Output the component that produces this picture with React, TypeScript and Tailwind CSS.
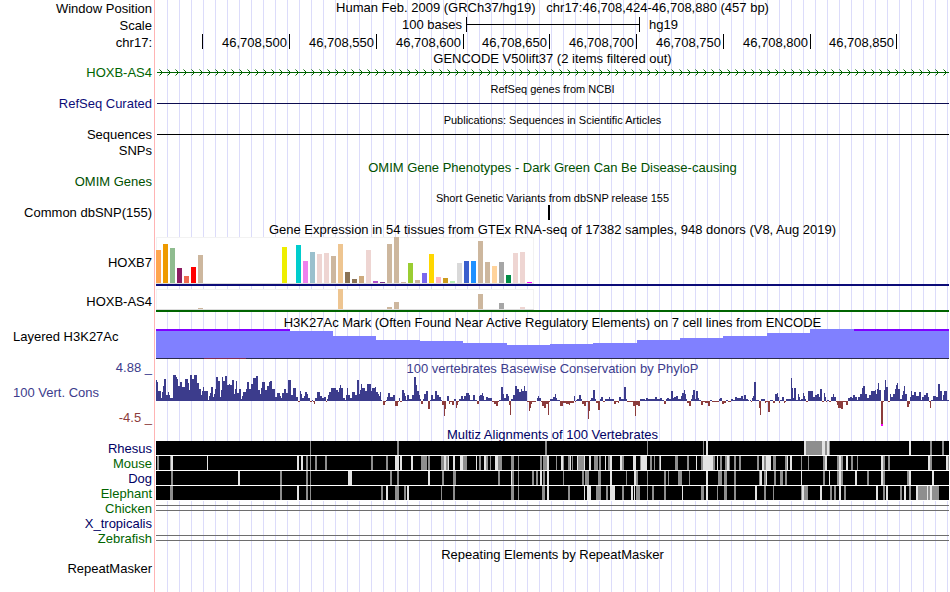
import type { ReactNode } from "react";
import clsx from "clsx";

const TRACK_WIDTH = 793;

type Pair = [number, number];

const rulerLabels = [
  "",
  "46,708,500",
  "46,708,550",
  "46,708,600",
  "46,708,650",
  "46,708,700",
  "46,708,750",
  "46,708,800",
  "46,708,850",
];

// tissue index, height, colour
type Tissue = [number, number, string];

const hoxb7: Tissue[] = [
  [0, 33, "#ffa54f"],
  [1, 39, "#ee9a00"],
  [2, 35, "#8fbc8f"],
  [3, 15, "#8b1c62"],
  [4, 7, "#ee6a50"],
  [5, 16, "#ff0000"],
  [6, 28, "#cdb79e"],
  [18, 36, "#eeee00"],
  [20, 38, "#00cdcd"],
  [21, 22, "#ee82ee"],
  [22, 31, "#9ac0cd"],
  [23, 29, "#eed5d2"],
  [24, 30, "#eed5d2"],
  [25, 27, "#cdb79e"],
  [26, 39, "#eec591"],
  [27, 11, "#8b7355"],
  [28, 4, "#8b7355"],
  [29, 7, "#cdaa7d"],
  [30, 33, "#eed5d2"],
  [31, 2, "#b452cd"],
  [32, 1, "#7a378b"],
  [33, 39, "#cdb79e"],
  [34, 46, "#cdb79e"],
  [35, 1, "#cdb79e"],
  [36, 20, "#9acd32"],
  [37, 3, "#cdb79e"],
  [38, 10, "#7a67ee"],
  [39, 29, "#ffd700"],
  [40, 6, "#ffb6c1"],
  [41, 5, "#cd9b1d"],
  [42, 2, "#b4eeb4"],
  [43, 20, "#d9d9d9"],
  [44, 22, "#3a5fcd"],
  [45, 22, "#1e90ff"],
  [46, 42, "#cdb79e"],
  [47, 21, "#cdb79e"],
  [48, 17, "#ffd39b"],
  [49, 21, "#a6a6a6"],
  [50, 8, "#008b45"],
  [51, 30, "#eed5d2"],
  [52, 31, "#eed5d2"],
  [53, 1, "#ff00ff"],
];

const hoxbAs4: Tissue[] = [
  [6, 1, "#cdb79e"],
  [26, 20, "#eec591"],
  [33, 2, "#cdb79e"],
  [34, 7, "#cdb79e"],
  [46, 15, "#cdb79e"],
  [49, 6, "#a6a6a6"],
  [52, 2, "#eed5d2"],
];

// x of the right edge, y of the top
const h3k27ac: Pair[] = [
  [134, 2], [177, 2], [220, 7], [264, 11], [307, 12], [351, 14], [394, 16], [437, 15],
  [481, 14], [524, 11], [567, 9], [611, 7], [654, 4], [698, 0], [793, 1],
];

// runs of [width, score] from each start
const phyloP: { start: number; runs: Pair[] }[] = [
  {
    start: 0,
    runs: [
      [1, 21], [1, 19], [3, 10], [1, 3], [1, 9], [1, 15], [2, 22], [2, 6], [1, 9], [1, 6], [3, 3],
      [3, 26], [1, 24], [1, 22], [2, 15], [2, 19], [3, 14], [3, 22], [1, 18], [1, 11], [2, 26],
      [2, 22], [3, 26], [2, 18], [2, 12], [1, 6], [1, 10], [1, 14], [4, 10], [1, 1], [1, 5], [1, 8],
      [2, 14], [1, 4], [1, 7], [1, 12], [2, 24], [2, 20], [1, 4], [1, 11], [1, 24], [2, 20],
      [2, 25], [2, 16], [1, 17], [2, 16], [2, 21], [1, 7], [1, 12], [1, 20], [2, 8], [2, 12],
      [1, 2], [1, 5], [3, 9], [1, 12], [2, 19], [2, 12], [2, 17], [3, 23], [2, 25], [2, 11], [1, 7],
      [1, 13], [3, 19], [2, 11], [2, 15], [1, 19], [2, 20], [3, 12], [2, 4], [3, 8], [1, 5], [1, 3],
      [2, 8], [2, 12], [2, 8], [3, 21], [2, 6], [3, 13], [2, 4], [2, -1], [1, 10], [1, 7], [2, 3],
      [1, 5], [2, 9], [1, 7], [2, 3], [2, -1], [1, 1], [1, -1], [1, -3], [2, 3], [3, 9], [2, 5],
      [2, 3], [2, 4], [1, -1], [1, 2], [1, 6], [2, 9], [5, 13], [2, 11], [1, 9], [1, 13], [1, 16],
      [2, 13], [2, 3], [1, 1], [1, 6], [1, 13], [2, 6],
    ],
  },
  {
    start: 194,
    runs: [
      [2, 3], [3, 9], [2, 6], [2, 21], [1, 7], [1, 11], [1, 17], [3, 13], [2, 10], [4, 17], [1, 10],
      [3, 13], [1, 14], [2, 9], [1, 7], [1, 5], [1, 9], [1, 1], [1, 0], [2, -4], [1, -1], [1, 1],
      [1, 4], [2, 8], [3, 4], [2, 6], [3, -5], [1, -1], [1, 3], [2, -1], [2, 11], [1, 8], [1, 5],
      [1, 1], [2, 6], [3, 2], [2, 6], [2, 24], [1, 16], [2, 10], [1, 6], [1, 2], [2, -3], [1, 2],
      [2, 7], [2, 10], [2, -8], [1, 1], [2, 6], [2, 2], [2, 10], [2, 6], [2, 4], [1, 1], [2, -4],
      [1, -15], [1, -8], [1, 0], [2, 5], [1, -3], [2, -1], [2, -4], [2, 2], [1, -7], [1, -4],
      [1, -1], [2, 2], [2, 5], [1, 2], [2, 5], [3, 8], [1, 6], [3, 1], [2, 6], [2, 1], [2, -3],
      [1, 5], [2, 6], [1, 8], [1, 5], [2, 1], [2, 4], [4, 3], [2, -1], [2, -3], [2, -5], [1, -1],
      [2, 1], [2, 14], [1, 7], [2, 3], [2, 7], [1, 5], [1, -4], [1, -14], [2, 2], [2, 6], [2, 15],
      [2, 12], [2, 9], [1, 12], [2, 10], [1, 15], [2, 10], [2, -1], [1, -10], [1, -7], [1, -3],
      [4, -1], [1, 0], [1, 3], [1, 5], [2, 3], [1, -1], [2, -5], [2, -7], [2, -3], [1, -14],
      [1, -1],
    ],
  },
  {
    start: 394,
    runs: [
      [3, 2], [2, 4], [1, 7], [1, 3], [2, 1], [1, 1], [3, -5], [3, -2], [3, -3], [1, -4], [4, -2],
      [1, 5], [1, -1], [1, 1], [2, 2], [2, 6], [1, 2], [2, -3], [2, -5], [2, -1], [1, -18],
      [1, -10], [1, 1], [2, 3], [2, 11], [1, 2], [2, -2], [2, -9], [1, 2], [2, 4], [2, -1], [4, 2],
      [1, 4], [4, 2], [2, -3], [2, -1], [1, -2], [2, 4], [3, 2], [2, 14], [1, 2], [2, -1], [4, -1],
      [2, -5], [1, -15], [2, -4], [2, -5], [5, 2], [1, 1], [2, 3], [7, 2], [2, 4], [3, 2], [2, 3],
      [2, 1], [2, -3], [1, 2], [2, 3], [2, 2], [2, 10], [1, 3], [2, 4], [2, 5], [3, 2], [1, 5],
      [2, 8], [1, 11], [1, 7], [1, 2], [2, -2], [2, -5], [1, 2], [1, 6], [2, 11], [1, 2], [2, 10],
      [1, 3], [2, 1], [2, -4], [2, -1], [3, -2], [2, -5], [2, 1], [7, -1], [1, 2], [2, 3], [2, -3],
      [2, -2], [2, 1], [3, -1], [2, 2], [2, 1], [2, 4], [4, 3], [2, 5], [1, 2], [2, 6], [2, 2],
      [1, 1],
    ],
  },
  {
    start: 594,
    runs: [
      [1, 1], [1, -1], [1, 3], [1, 5], [2, 19], [3, 1], [1, -7], [1, -14], [4, 2], [1, -2], [2, -1],
      [2, -11], [3, 1], [2, -2], [2, 7], [1, 8], [1, 4], [1, -2], [2, 1], [2, 4], [1, -2], [1, -1],
      [5, 2], [1, 23], [1, 13], [1, 3], [2, 13], [2, 1], [1, 7], [1, 4], [1, 1], [2, 2], [1, 8],
      [1, 5], [1, 2], [2, -1], [5, 10], [2, 4], [2, 6], [2, 7], [1, 4], [2, 12], [2, -1], [1, 8],
      [1, 4], [1, -1], [2, 1], [2, -1], [2, 4], [1, 7], [2, 4], [1, -1], [1, -4], [3, -7], [2, -8],
      [3, -1], [2, -4], [2, 3], [2, 4], [1, 3], [2, 6], [2, 4], [1, 1], [2, 4], [2, 7], [1, 13],
      [2, 15], [2, 7], [2, 3], [2, 6], [4, 10], [1, 11], [1, 7], [1, 12], [1, 18], [2, 11],
      [2, -23], [1, -1], [1, 11], [1, 21], [2, 14], [2, -1], [1, 7], [2, 4], [2, 7], [1, 12],
      [1, 16], [1, 18], [2, 12], [2, 2], [1, 6], [1, 10], [1, 15], [2, 7], [2, -6], [1, -3], [1, 4],
      [1, 10], [2, 6], [2, 9], [3, 5], [2, 9], [1, 1], [2, 4], [2, 6], [2, 8], [1, 4], [1, -1],
      [1, -7], [2, 1], [3, 5], [2, 4], [2, 17], [2, 10], [1, 1], [1, 6], [3, 10], [2, 1],
    ],
  },
];

// [x, width] of the weaker (gray) and missing (light) columns
const alignments: { name: string; color: string; gray: Pair[]; light: Pair[] }[] = [
  {
    name: "Rhesus",
    color: "text-[#000064]",
    gray: [
      [154, 1], [241, 2], [389, 2], [491, 1], [547, 1], [650, 16], [669, 2], [673, 1], [774, 2],
      [786, 2],
    ],
    light: [[550, 2], [648, 2], [666, 3], [671, 2], [753, 2]],
  },
  {
    name: "Mouse",
    color: "text-[#006400]",
    gray: [
      [1, 2], [14, 1], [150, 2], [154, 1], [159, 2], [169, 2], [215, 2], [230, 2], [265, 6],
      [272, 2], [285, 3], [290, 2], [307, 4], [323, 2], [330, 2], [334, 1], [342, 4], [355, 3],
      [362, 1], [384, 2], [387, 4], [400, 1], [407, 1], [412, 2], [416, 1], [422, 6], [438, 4],
      [443, 2], [452, 2], [466, 2], [484, 1], [494, 2], [498, 1], [503, 1], [519, 3], [531, 2],
      [545, 2], [557, 2], [564, 2], [569, 2], [573, 1], [578, 2], [583, 2], [601, 2], [608, 2],
      [617, 3], [629, 2], [645, 1], [652, 1], [667, 2], [681, 2], [685, 2], [695, 2], [701, 1],
      [727, 2], [732, 2], [774, 2], [792, 1],
    ],
    light: [
      [15, 2], [51, 1], [141, 2], [145, 2], [239, 4], [244, 2], [255, 2], [288, 2], [292, 1],
      [297, 2], [304, 3], [320, 1], [328, 2], [339, 3], [391, 2], [405, 2], [414, 1], [421, 1],
      [428, 1], [433, 2], [449, 1], [454, 2], [464, 2], [477, 3], [485, 6], [504, 1], [540, 1],
      [547, 10], [561, 1], [571, 2], [606, 2], [610, 5], [631, 1], [634, 2], [669, 2], [683, 2],
      [690, 2], [725, 2], [772, 2], [790, 2],
    ],
  },
  {
    name: "Dog",
    color: "text-[#000064]",
    gray: [
      [15, 2], [124, 2], [150, 2], [154, 1], [234, 2], [241, 2], [286, 2], [297, 3], [342, 2],
      [356, 2], [362, 1], [376, 2], [380, 2], [387, 2], [407, 1], [426, 2], [429, 4], [442, 3],
      [470, 1], [480, 2], [491, 1], [508, 2], [512, 1], [522, 4], [533, 1], [562, 4], [568, 3],
      [578, 2], [603, 1], [608, 2], [618, 2], [624, 3], [629, 2], [667, 2], [681, 2], [685, 2],
      [711, 2], [727, 2], [751, 2],
    ],
    light: [
      [82, 2], [192, 4], [272, 2], [355, 1], [384, 2], [391, 2], [454, 2], [478, 2], [550, 2],
      [604, 2], [610, 1], [645, 1], [673, 1], [683, 2], [699, 2], [725, 2], [753, 2], [776, 2],
    ],
  },
  {
    name: "Elephant",
    color: "text-[#006400]",
    gray: [
      [14, 3], [124, 2], [150, 2], [154, 1], [225, 2], [239, 4], [248, 2], [285, 1], [297, 2],
      [355, 3], [362, 1], [386, 3], [412, 2], [440, 5], [450, 2], [466, 2], [480, 4], [491, 1],
      [496, 2], [508, 2], [545, 3], [561, 1], [568, 3], [578, 2], [608, 2], [617, 1], [645, 1],
      [648, 4], [674, 2], [678, 2], [688, 2], [727, 2], [744, 2], [753, 2], [762, 9], [772, 2],
      [776, 7],
    ],
    light: [
      [141, 2], [230, 2], [251, 2], [391, 2], [428, 1], [431, 4], [454, 5], [475, 2], [478, 1],
      [526, 1], [550, 2], [599, 2], [646, 2], [664, 2], [683, 2], [720, 2], [730, 2], [748, 2],
      [760, 2], [771, 1], [774, 2],
    ],
  },
];

function Row({
  className,
  label,
  labelClass,
  children,
}: {
  className: string;
  label?: ReactNode;
  labelClass?: string;
  children?: ReactNode;
}) {
  return (
    <div className={clsx("flex whitespace-nowrap", className)}>
      <div className={clsx("w-39 shrink-0 pr-1 text-right", labelClass)}>{label}</div>
      <div className="min-w-0 flex-1">{children}</div>
    </div>
  );
}

function Title({ children, className }: { children: ReactNode; className?: string }) {
  return <h2 className={clsx("pt-px text-center", className)}>{children}</h2>;
}

function Plot({ height, children }: { height: number; children: ReactNode }) {
  return (
    <svg
      className="block h-full w-full overflow-visible"
      viewBox={`0 0 ${TRACK_WIDTH} ${height}`}
      preserveAspectRatio="none"
      shapeRendering="crispEdges"
      aria-hidden="true"
    >
      {children}
    </svg>
  );
}

function Line({ color }: { color: string }) {
  return (
    <Plot height={14}>
      <rect x="1" y="6" width={TRACK_WIDTH - 1} height="1" fill={color} />
    </Plot>
  );
}

function Expression({
  tissues,
  height,
  top,
  base,
  color,
}: {
  tissues: Tissue[];
  height: number;
  top: number;
  base: number;
  color: string;
}) {
  return (
    <Plot height={height}>
      <rect x="0" y={top} width="378" height={base - top} fill="#f2f2f2" />
      <rect x="1" y={top + 1} width="376" height={base - top - 1} fill="#fff" />
      {tissues.map(([i, h, fill]) => (
        <rect key={i} x={i * 7} y={base - h} width="5" height={h} fill={fill} />
      ))}
      <rect x="0" y={base} width="378" height="1" fill="#dcdcdc" />
      <rect x="0" y={base + 1} width={TRACK_WIDTH} height="2" fill={color} />
    </Plot>
  );
}

function Histone() {
  return (
    <Plot height={30}>
      {h3k27ac.map(([end, y], i) => {
        const x = i === 0 ? 0 : h3k27ac[i - 1][0];
        return <rect key={end} x={x} y={y} width={end - x} height={29 - y} fill="#8080ff" />;
      })}
      <rect x="0" y="0" width="134" height="2" fill="#8000ff" />
      <rect x="698" y="0" width="95" height="2" fill="#8000ff" />
      <rect x="0" y="29" width={TRACK_WIDTH} height="1" fill="#2b2b48" />
      <rect x="48" y="29" width="42" height="1" fill="#80304f" />
    </Plot>
  );
}

function Conservation() {
  return (
    <Plot height={50}>
      {phyloP.map(({ start, runs }) => {
        let x = start;
        return runs.map(([w, score]) => {
          const left = x;
          x += w;
          return (
            <rect
              key={left}
              x={left}
              y={score > 0 ? 25 - score : 25}
              width={w}
              height={Math.abs(score)}
              fill={score > 0 ? "#3c3c8c" : "#8c3c3c"}
            />
          );
        });
      })}
      <rect x="725" y="48" width="2" height="2" fill="#ff00ff" />
    </Plot>
  );
}

function Alignment({ gray, light }: { gray: Pair[]; light: Pair[] }) {
  return (
    <Plot height={15}>
      <rect width={TRACK_WIDTH} height="15" fill="#fff" />
      <rect width={TRACK_WIDTH} height="14" fill="#000" />
      {gray.map(([x, w]) => (
        <rect key={x} x={x} width={w} height="14" fill="#8e8e8e" />
      ))}
      {light.map(([x, w]) => (
        <rect key={x} x={x} width={w} height="14" fill="#e3e3e3" />
      ))}
    </Plot>
  );
}

function DoubleLine() {
  return (
    <Plot height={15}>
      <rect y="4" width={TRACK_WIDTH} height="1" fill="#6e6e6e" />
      <rect y="9" width={TRACK_WIDTH} height="1" fill="#6e6e6e" />
    </Plot>
  );
}

export default function App() {
  return (
    <main className="min-h-screen bg-[linear-gradient(to_right,white_154px,#ffb4b4_154px,#ffb4b4_155px,white_155px,white_156px,transparent_156px),repeating-linear-gradient(to_right,transparent_0px,transparent_11px,#dcdcfa_11px,#dcdcfa_12px)] pr-px font-['Liberation_Sans',Arial,sans-serif] text-[13px] text-black">
      <Row className="h-[17px] leading-[17px]" label="Window Position">
        <h1 className="text-center leading-[15px] whitespace-pre">
          {"Human Feb. 2009 (GRCh37/hg19)   chr17:46,708,424-46,708,880 (457 bp)"}
        </h1>
      </Row>
      <Row className="h-[17px] leading-[17px]" label="Scale">
        <div className="grid grid-cols-[310fr_174fr_309fr] leading-[15px]">
          <span className="pr-1 text-right">100 bases</span>
          <span className="flex h-[15px] items-center border-x border-black">
            <span className="h-px w-full bg-black" />
          </span>
          <span className="pl-[9px]">hg19</span>
        </div>
      </Row>
      <Row className="h-4 leading-[18px]" label="chr17:">
        <div className="grid grid-cols-[47fr_87fr_87fr_87fr_86fr_87fr_87fr_87fr_86fr_52fr]">
          {rulerLabels.map((label) => (
            <span key={label} className="h-[15px] border-r border-black pr-0.5 text-right">
              {label}
            </span>
          ))}
        </div>
      </Row>

      <Row className="h-4 leading-4">
        <Title>GENCODE V50lift37 (2 items filtered out)</Title>
      </Row>
      <Row className="h-3.5 leading-3.5" label="HOXB-AS4" labelClass="text-[#006400]">
        <Plot height={14}>
          <rect x="1" y="6" width={TRACK_WIDTH - 1} height="1" fill="#006400" />
          {Array.from({ length: 99 }, (_, i) => (
            <path
              key={i}
              d={`M${i * 8 + 3.5} 3.5l3 3l-3 3`}
              fill="none"
              stroke="#006400"
              strokeWidth="1"
              shapeRendering="auto"
            />
          ))}
        </Plot>
      </Row>

      <Row className="h-[17px] leading-[17px]">
        <Title className="text-[11px]">RefSeq genes from NCBI</Title>
      </Row>
      <Row className="h-3.5 leading-3.5" label="RefSeq Curated" labelClass="text-[#0c0c78]">
        <Line color="#0c0c50" />
      </Row>

      <Row className="h-[17px] leading-[17px]">
        <Title className="text-[11px]">Publications: Sequences in Scientific Articles</Title>
      </Row>
      <Row className="h-3.5 leading-3.5" label="Sequences">
        <Line color="#000" />
      </Row>
      <Row className="h-4 leading-[18px]" label="SNPs" />

      <Row className="h-[17px] leading-[17px]">
        <Title className="text-[#005000]">
          OMIM Gene Phenotypes - Dark Green Can Be Disease-causing
        </Title>
      </Row>
      <Row className="h-3.5 leading-3.5" label="OMIM Genes" labelClass="text-[#005000]" />

      <Row className="h-[17px] leading-[17px]">
        <Title className="text-[11px]">Short Genetic Variants from dbSNP release 155</Title>
      </Row>
      <Row className="h-3.5 leading-3.5" label="Common dbSNP(155)">
        <Plot height={14}>
          <rect x="392" y="-1" width="2" height="15" />
        </Plot>
      </Row>

      <Row className="h-[17px] leading-[17px]">
        <Title>
          Gene Expression in 54 tissues from GTEx RNA-seq of 17382 samples, 948 donors (V8, Aug 2019)
        </Title>
      </Row>
      <Row className="h-[51px] leading-[51px]" label="HOXB7">
        <Expression tissues={hoxb7} height={51} top={0} base={46} color="#0c0c78" />
      </Row>
      <Row className="h-[26px] leading-[28px]" label="HOXB-AS4">
        <Expression tissues={hoxbAs4} height={26} top={1} base={21} color="#006400" />
      </Row>

      <Row className="h-[15px] leading-[15px]">
        <Title>
          H3K27Ac Mark (Often Found Near Active Regulatory Elements) on 7 cell lines from ENCODE
        </Title>
      </Row>
      <Row
        className="h-[30px] leading-[15px]"
        label={<p className="pl-[13px] text-left">Layered H3K27Ac</p>}
      >
        <Histone />
      </Row>

      <Row className="h-[17px] leading-[17px]" label="4.88 _" labelClass="text-[#3c3c8c]">
        <Title className="text-[#3c3c8c]">
          100 vertebrates Basewise Conservation by PhyloP
        </Title>
      </Row>
      <Row
        className="h-[50px] leading-[17px]"
        label={
          <>
            <p className="pt-2 pb-2 pl-[13px] text-left text-[#3c3c8c]">100 Vert. Cons</p>
            <p className="text-[#8c3c3c]">-4.5 _</p>
          </>
        }
      >
        <Conservation />
      </Row>

      <Row className="h-[15px] leading-[15px]">
        <Title className="text-[#000064]">Multiz Alignments of 100 Vertebrates</Title>
      </Row>
      {alignments.map(({ name, color, gray, light }) => (
        <Row key={name} className="h-[15px] leading-[15px]" label={name} labelClass={color}>
          <Alignment gray={gray} light={light} />
        </Row>
      ))}
      <Row className="h-[15px] leading-[15px]" label="Chicken" labelClass="text-[#006400]">
        <DoubleLine />
      </Row>
      <Row className="h-[15px] leading-[15px]" label="X_tropicalis" labelClass="text-[#000064]" />
      <Row className="h-[15px] leading-[15px]" label="Zebrafish" labelClass="text-[#006400]">
        <DoubleLine />
      </Row>

      <Row className="h-[15px] leading-[15px]">
        <Title>Repeating Elements by RepeatMasker</Title>
      </Row>
      <Row className="h-[15px] leading-[15px]" label="RepeatMasker" />
    </main>
  );
}
